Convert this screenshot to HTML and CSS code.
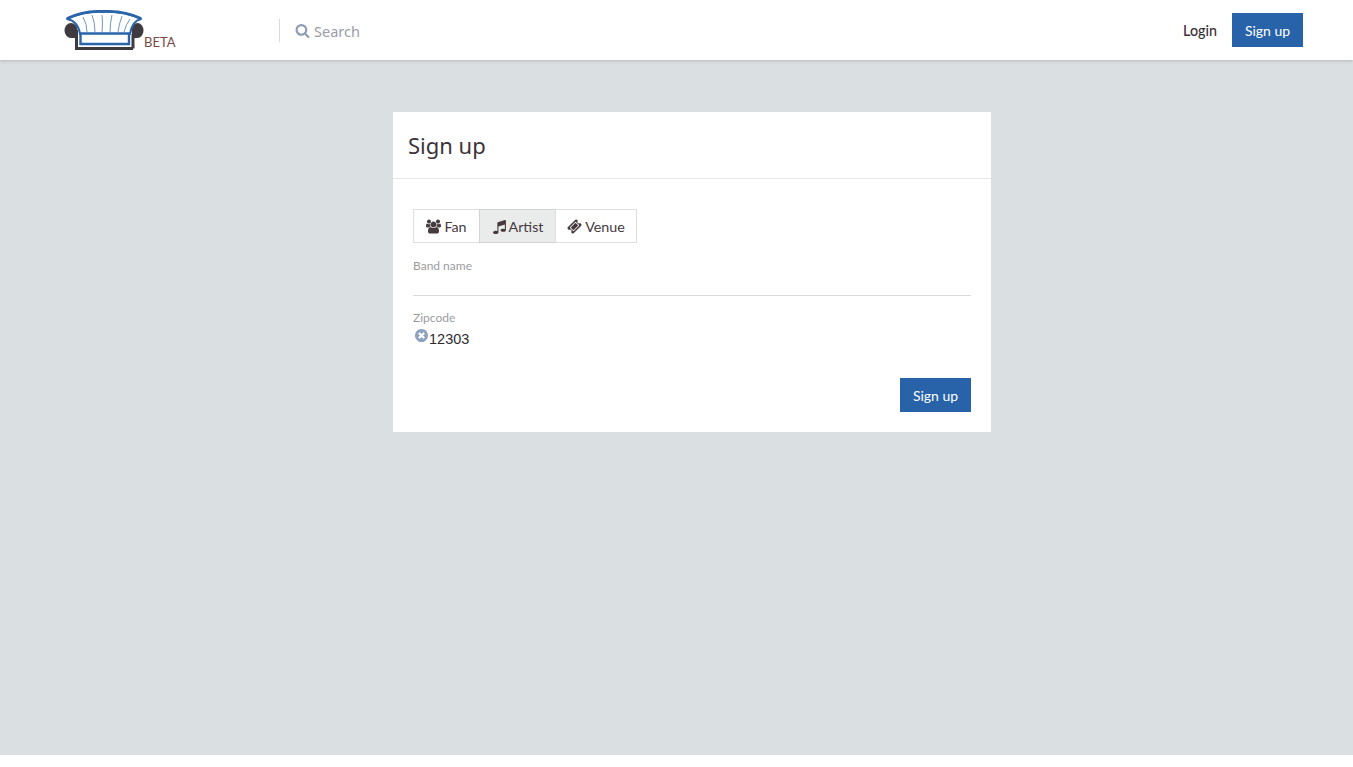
FILE: index.html
```html
<!DOCTYPE html>
<html lang="en">
<head>
    <meta charset="UTF-8">
    <meta name="viewport" content="width=device-width, initial-scale=1.0">
    <title>Sign up</title>
    <link rel="stylesheet" href="styles.css">
</head>
<body>

    <header class="topbar">
        <a class="logo" href="#">
            <svg class="logo-couch" viewBox="0 0 80 40" width="80" height="40">
                <!-- frame -->
                <path d="M12.500 24V38.500H69" fill="none" stroke="#3f3a40" stroke-width="3"/>
                <path d="M69 24V38.500" fill="none" stroke="#3f3a40" stroke-width="3"/>
                <ellipse cx="7" cy="20.500" rx="6.500" ry="7.500" fill="#3f3a40"/>
                <ellipse cx="73.500" cy="20.500" rx="6" ry="7.500" fill="#3f3a40"/>
                <path d="M7 28Q10 28 14 28V20H7Z" fill="#3f3a40"/>
                <path d="M73 28Q70 28 68 28V20H73Z" fill="#3f3a40"/>
                <!-- back -->
                <path d="M3 9Q20 1 39 1.500Q60 1 77 9Q68 11 66 24H16Q14 11 3 9Z" fill="#fff" stroke="#2a64ab" stroke-width="2" stroke-linejoin="round"/>
                <path d="M3 8.500Q20 0.500 39 1.500Q60 0.500 77 8.500" fill="none" stroke="#2a64ab" stroke-width="2.800"/>
                <g fill="none" stroke="#6f96c4" stroke-width="1">
                    <path d="M19 7Q23 14 23 22"/>
                    <path d="M28 5Q31 13 31 22"/>
                    <path d="M38 5Q39 13 38 22"/>
                    <path d="M48 5Q46 13 46 22"/>
                    <path d="M58 6Q55 14 54 22"/>
                    <path d="M66 9Q62 14 60 22"/>
                </g>
                <!-- seat -->
                <path d="M16.500 23.500H65V34H16.500Z" fill="#fff" stroke="#2a64ab" stroke-width="2.400"/>
            </svg>
            <span class="beta">BETA</span>
        </a>
        <div class="search">
            <svg class="icon icon-search" viewBox="0 0 1792 1792"><path d="M1216 832q0-185-131.500-316.500t-316.500-131.500-316.500 131.500-131.500 316.500 131.500 316.500 316.500 131.500 316.500-131.500 131.500-316.500zm512 832q0 52-38 90t-90 38q-54 0-90-38l-343-342q-179 124-399 124-143 0-273.500-55.500t-225-150-150-225-55.500-273.500 55.500-273.500 150-225 225-150 273.500-55.500 273.500 55.500 225 150 150 225 55.500 273.500q0 220-124 399l343 343q37 37 37 90z"/></svg>
            <span class="search-text">Search</span>
        </div>
        <nav class="topnav">
            <a class="login" href="#">Login</a>
            <a class="btn" href="#">Sign up</a>
        </nav>
    </header>

    <main class="content">
        <section class="card">
            <h1 class="card-title">Sign up</h1>
            <form class="card-body">
                <div class="tabs">
                    <div class="tab tab-fan">
                        <svg class="icon" viewBox="0 0 1920 1792"><path d="M593 896q-162 5-265 128h-134q-82 0-138-40.500t-56-118.500q0-353 124-353 6 0 43.500 21t97.500 42.500 119 21.500q67 0 133-23-5 37-5 66 0 139 81 256zm1071 637q0 120-73 189.500t-194 69.500h-874q-121 0-194-69.500t-73-189.500q0-53 3.500-103.500t14-109 26.500-108.500 43-97.500 62-81 85.500-53.500 111.500-20q10 0 43 21.500t73 48 107 48 135 21.500 135-21.500 107-48 73-48 43-21.500q61 0 111.500 20t85.500 53.500 62 81 43 97.500 26.500 108.500 14 109 3.500 103.500zm-1024-1277q0 106-75 181t-181 75-181-75-75-181 75-181 181-75 181 75 75 181zm704 384q0 159-112.500 271.500t-271.500 112.500-271.500-112.500-112.500-271.500 112.500-271.500 271.500-112.500 271.500 112.500 112.500 271.500zm576 225q0 78-56 118.500t-138 40.500h-134q-103-123-265-128 81-117 81-256 0-29-5-66 66 23 133 23 59 0 119-21.500t97.500-42.500 43.500-21q124 0 124 353zm-128-609q0 106-75 181t-181 75-181-75-75-181 75-181 181-75 181 75 75 181z"/></svg>
                        Fan
                    </div>
                    <div class="tab tab-artist active">
                        <svg class="icon" viewBox="0 0 1792 1792"><path d="M1664 224v1120q0 50-34 89t-86 60.500-103.500 32-96.500 10.500-96.500-10.500-103.500-32-86-60.500-34-89 34-89 86-60.500 103.500-32 96.500-10.500q105 0 192 39v-537l-768 237v709q0 50-34 89t-86 60.500-103.500 32-96.500 10.500-96.500-10.500-103.500-32-86-60.500-34-89 34-89 86-60.500 103.500-32 96.500-10.500q105 0 192 39v-967q0-31 19-56.500t49-35.500l832-256q12-4 28-4 40 0 68 28t28 68z"/></svg>
                        Artist
                    </div>
                    <div class="tab tab-venue">
                        <svg class="icon" viewBox="0 0 1792 1792"><path d="M1024 452l316 316-572 572-316-316zm-211 979l618-618q19-19 19-45t-19-45l-362-362q-18-18-45-18t-45 18l-618 618q-19 19-19 45t19 45l362 362q18 18 45 18t45-18zm889-637l-907 908q-37 37-90.500 37t-90.500-37l-126-126q56-56 56-136t-56-136-136-56-136 56l-125-126q-37-37-37-90.500t37-90.500l907-906q37-37 90.500-37t90.500 37l125 125q-56 56-56 136t56 136 136 56 136-56l126 125q37 37 37 90.500t-37 90.500z"/></svg>
                        Venue
                    </div>
                </div>

                <div class="field field-band">
                    <label class="field-label">Band name</label>
                    <div class="field-line"></div>
                </div>

                <div class="field field-zip">
                    <label class="field-label">Zipcode</label>
                    <div class="zip-value">
                        <svg class="icon icon-clear" viewBox="128 128 1536 1536"><path d="M1277 1122q0-26-19-45l-181-181 181-181q19-19 19-45 0-27-19-46l-90-90q-19-19-46-19-26 0-45 19l-181 181-181-181q-19-19-45-19-27 0-46 19l-90 90q-19 19-19 46 0 26 19 45l181 181-181 181q-19 19-19 45 0 27 19 46l90 90q19 19 46 19 26 0 45-19l181-181 181 181q19 19 45 19 27 0 46-19l90-90q19-19 19-46zm387-226q0 209-103 385.500t-279.500 279.500-385.500 103-385.500-103-279.500-279.500-103-385.500 103-385.500 279.500-279.500 385.500-103 385.500 103 279.500 279.500 103 385.500z"/></svg>
                        <span class="zip-text">12303</span>
                    </div>
                </div>

                <div class="form-actions">
                    <button class="btn" type="button">Sign up</button>
                </div>
            </form>
        </section>
    </main>

    <div class="bottom"></div>

</body>
</html>
```

FILE: styles.css
```css
* {
    box-sizing: border-box;
}
body {
    margin: 0;
    background-color: #fff;
    font-family: Lato, sans-serif;
    color: #3f3439;
}
a {
    text-decoration: none;
    color: inherit;
}
.topbar {
    display: flex;
    align-items: center;
    height: 60px;
    padding-right: 50px;
    background-color: #fff;
    box-shadow: 0 1px 3px rgba(0, 0, 0, 0.18);
    position: relative;
}
.logo {
    display: flex;
    align-items: flex-end;
    align-self: flex-start;
    width: 215px;
    height: 50px;
    margin-left: 64px;
    padding-top: 10px;
}
.logo-couch {
    display: block;
    flex: none;
}
.beta {
    font-size: 13px;
    line-height: 14px;
    margin-bottom: 1px;
    color: #7a4a44;
}
.search {
    display: flex;
    align-items: center;
    height: 23px;
    padding-left: 15px;
    border-left: 1px solid #d8dadc;
    font-family: "Noto Sans", sans-serif;
    font-size: 14.500px;
    color: #9a9ca8;
}
.search-text {
    padding-top: 2px;
}
.icon {
    width: 15px;
    height: 15px;
    fill: currentColor;
    flex: none;
}
.icon-search {
    margin-right: 4px;
    color: #8e9db4;
}
.topnav {
    display: flex;
    align-items: center;
    margin-left: auto;
}
.login {
    margin-right: 15px;
    font-size: 14.300px;
    font-weight: 500;
    color: #3b3035;
}
.btn {
    display: block;
    height: 34px;
    width: 71px;
    border: none;
    padding: 1px 0 0;
    background-color: #2862a8;
    color: #fff;
    font-family: Lato, sans-serif;
    font-size: 14px;
    line-height: 33px;
    text-align: center;
    cursor: pointer;
}
.content {
    height: 695px;
    padding-top: 52px;
    background-color: #dadfe2;
}
.card {
    width: 598px;
    height: 320px;
    margin-left: 393px;
    background-color: #fff;
}
.card-title {
    height: 67px;
    margin: 0;
    padding: 0 15px;
    border-bottom: 1px solid #e6e7e8;
    font-family: "Noto Sans", sans-serif;
    font-size: 22px;
    font-weight: 400;
    line-height: 67px;
    color: #3d3439;
}
.card-body {
    padding: 30px 20px 0;
}
.tabs {
    display: flex;
    height: 34px;
}
.tab {
    display: flex;
    align-items: center;
    justify-content: center;
    gap: 3px;
    height: 34px;
    border: 1px solid #dcdfe1;
    margin-left: -1px;
    background-color: #fff;
    font-size: 14.300px;
    color: #453a3e;
}
.tab:first-child {
    margin-left: 0;
}
.tab-fan {
    width: 67px;
}
.tab-artist {
    width: 77px;
    gap: 2px;
}
.tab-venue {
    width: 82px;
}
.tab.active {
    background-color: #eaecec;
    border-color: #cfd3d6;
}
.field-label {
    display: block;
    font-size: 12px;
    line-height: 14px;
    color: #9b9ba0;
}
.field-band {
    margin-top: 16px;
}
.field-line {
    height: 23px;
    border-bottom: 1px solid #d9dadb;
}
.field-zip {
    margin-top: 15px;
}
.zip-value {
    display: flex;
    align-items: flex-start;
    height: 20px;
    margin-top: 3px;
    font-family: "Liberation Sans", sans-serif;
    font-size: 14.500px;
    line-height: 20px;
    color: #2f2a2d;
}
.zip-text {
    padding-top: 1px;
}
.icon-clear {
    width: 13px;
    height: 13px;
    margin: 1px 1px 0 2px;
    color: #8ea3c0;
}
.form-actions {
    display: flex;
    justify-content: flex-end;
    margin-top: 30px;
}
.bottom {
    height: 12px;
}
```
